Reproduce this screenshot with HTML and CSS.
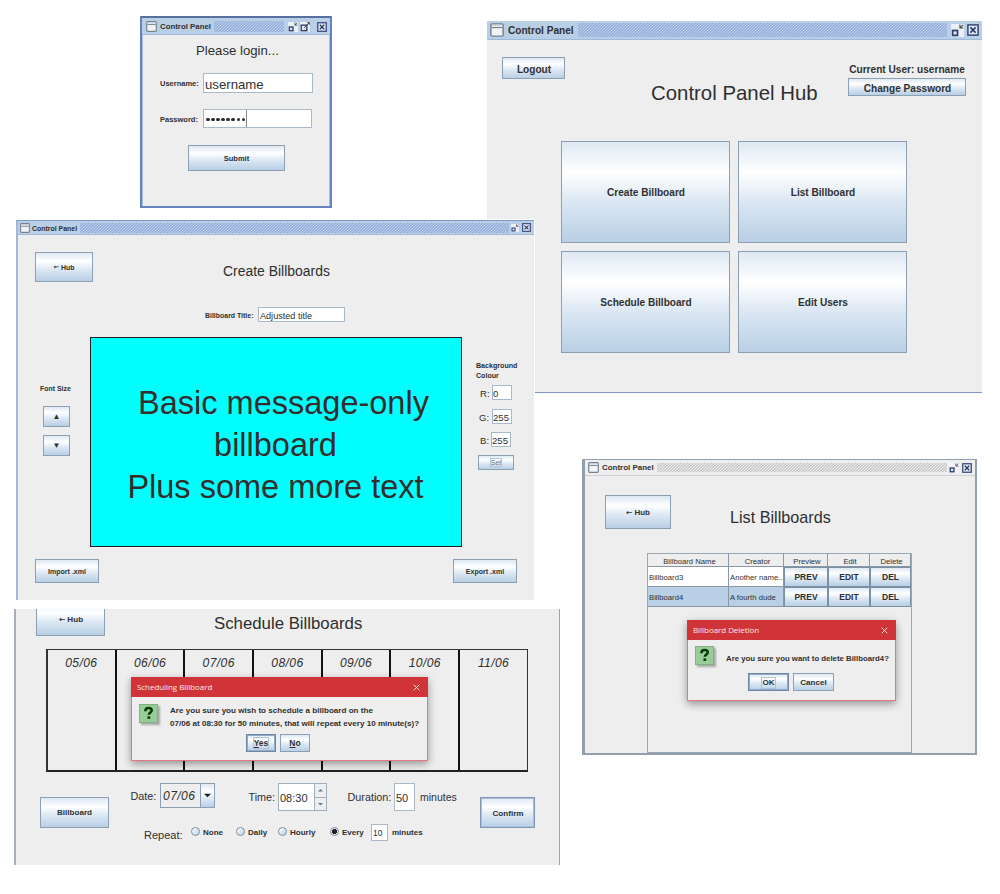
FILE: index.html
```html
<!DOCTYPE html>
<html lang="en">
<head>
<meta charset="utf-8">
<title>Billboard Control Panel</title>
<link rel="stylesheet" href="styles.css">
</head>
<body>
<svg class="defs" width="0" height="0" aria-hidden="true">
  <symbol id="i-window" viewBox="0 0 16 16">
    <rect x="1" y="1" width="14" height="14" rx="1.5" fill="#f1f3f6" stroke="#76828e" stroke-width="1.7"/>
    <path d="M2 5.2h12" stroke="#76828e" stroke-width="1.4"/>
    <path d="M3 3h10" stroke="#b3cae4" stroke-width="1.6" stroke-dasharray="1.5 1"/>
  </symbol>
  <symbol id="i-min" viewBox="0 0 16 16">
    <rect width="16" height="16" fill="#f2f5fa" opacity=".85"/>
    <rect x="2" y="8" width="6" height="6" fill="#dfe7f3" stroke="#32426e" stroke-width="2.2"/>
    <path d="M11 .5v4.500H15M11.500 4.500l3.500-3.500" fill="none" stroke="#444" stroke-width="1.300"/>
  </symbol>
  <symbol id="i-max" viewBox="0 0 16 16">
    <rect width="16" height="16" fill="#f2f5fa" opacity=".85"/>
    <rect x="2" y="5" width="9" height="9" fill="#dfe7f3" stroke="#32426e" stroke-width="2.200"/>
    <path d="M11.500 1H15v3.500M14.500 1.500L6.500 9.500" fill="none" stroke="#333" stroke-width="1.400"/>
  </symbol>
  <symbol id="i-close" viewBox="0 0 16 16">
    <rect x="1.200" y="1.200" width="13.600" height="13.600" fill="#e2e9f4" stroke="#35457a" stroke-width="2"/>
    <path d="M4.500 4.500l7 7M11.500 4.500l-7 7" stroke="#2b365c" stroke-width="2"/>
  </symbol>
  <symbol id="i-question" viewBox="0 0 20 20">
    <rect x=".5" y=".5" width="19" height="19" fill="#99cc99" stroke="#7fae7f"/>
    <path d="M6.700 7.600c0-2.200 1.400-3.300 3.400-3.300s3.300 1 3.300 2.600c0 2.200-3 2.100-3 4.500" fill="none" stroke="#063c06" stroke-width="2.700"/>
    <rect x="8.900" y="13" width="2.900" height="2.700" fill="#063c06"/>
  </symbol>
  <symbol id="i-x" viewBox="0 0 10 10"><path d="M1 1l8 8M9 1l-8 8" stroke="#fff" stroke-width="1.200"/></symbol>
</svg>

<main class="board">

  <section class="window hub">
    <header class="titlebar">
      <svg class="app-icon"><use href="#i-window"/></svg><span class="caption">Control Panel</span><i class="bumps"></i>
      <svg class="ctl"><use href="#i-min"/></svg><svg class="ctl"><use href="#i-close"/></svg>
    </header>
    <div class="hub-top">
      <button class="btn logout">Logout</button>
      <h1>Control Panel Hub</h1>
      <div class="user"><span>Current User: username</span><button class="btn">Change Password</button></div>
    </div>
    <div class="hub-grid">
      <button class="btn">Create Billboard</button><button class="btn">List Billboard</button>
      <button class="btn">Schedule Billboard</button><button class="btn">Edit Users</button>
    </div>
  </section>

  <section class="window login">
    <header class="titlebar">
      <svg class="app-icon"><use href="#i-window"/></svg><span class="caption">Control Panel</span><i class="bumps"></i>
      <svg class="ctl"><use href="#i-min"/></svg><svg class="ctl"><use href="#i-max"/></svg><svg class="ctl last"><use href="#i-close"/></svg>
    </header>
    <h1>Please login...</h1>
    <div class="field"><label>Username:</label><span class="input">username</span></div>
    <div class="field pass"><label>Password:</label><span class="input"><b></b><b></b><b></b><b></b><b></b><b></b><b></b><b></b><i class="caret"></i></span></div>
    <button class="btn submit">Submit</button>
  </section>

  <section class="window create">
    <header class="titlebar">
      <svg class="app-icon"><use href="#i-window"/></svg><span class="caption">Control Panel</span><i class="bumps"></i>
      <svg class="ctl"><use href="#i-min"/></svg><svg class="ctl"><use href="#i-close"/></svg>
    </header>
    <div class="create-top"><button class="btn"><span class="arrow">←</span>Hub</button><h1>Create Billboards</h1></div>
    <div class="title-row"><label>Billboard Title:</label><span class="input">Adjusted title</span></div>
    <div class="editor">
      <div class="font-size"><label>Font Size</label><button class="btn">▲</button><button class="btn">▼</button></div>
      <div class="canvas"><p class="first">Basic message-only</p><p>billboard</p><p>Plus some more text</p></div>
      <div class="colour">
        <label>Background<br>Colour</label>
        <div class="chan"><span>R:</span><span class="input">0</span></div>
        <div class="chan green"><span>G:</span><span class="input">255</span></div>
        <div class="chan blue"><span>B:</span><span class="input">255</span></div>
        <button class="btn set"><span>Set</span></button>
      </div>
    </div>
    <div class="xml"><button class="btn">Import .xml</button><button class="btn">Export .xml</button></div>
  </section>

  <section class="window schedule">
    <div class="sched-top"><button class="btn"><span class="arrow">←</span>Hub</button><h1>Schedule Billboards</h1></div>
    <div class="days"><span>05/06</span><span>06/06</span><span>07/06</span><span>08/06</span><span>09/06</span><span>10/06</span><span>11/06</span></div>
    <div class="sched-form">
      <button class="btn pick">Billboard</button>
      <div class="options">
        <div class="when">
          <span class="lbl date">Date:</span><span class="select">07/06<i><svg viewBox="0 0 8 5"><path d="M0 .5h8L4 4.500z" fill="#222"/></svg></i></span>
          <span class="lbl time">Time:</span><span class="spinner">08:30<i><svg viewBox="0 0 6 4"><path d="M0 3.500h6L3 .5z" fill="#667788"/></svg><svg viewBox="0 0 6 4"><path d="M0 .5h6L3 3.500z" fill="#667788"/></svg></i></span>
          <span class="lbl duration">Duration:</span><span class="input dur">50</span><span class="lbl mins">minutes</span>
        </div>
        <div class="repeat">
          <span class="lbl">Repeat:</span>
          <span class="radio none"><i></i>None</span><span class="radio daily"><i></i>Daily</span><span class="radio hourly"><i></i>Hourly</span><span class="radio every on"><i></i>Every</span>
          <span class="input ten">10</span><b class="unit">minutes</b>
        </div>
      </div>
      <button class="btn confirm">Confirm</button>
    </div>
    <div class="dialog sched-dialog">
      <header><span>Scheduling Billboard</span><svg><use href="#i-x"/></svg></header>
      <div class="message"><svg class="q"><use href="#i-question"/></svg><p>Are you sure you wish to schedule a billboard on the<br>07/06 at 08:30 for 50 minutes, that will repeat every 10 minute(s)?</p></div>
      <div class="actions"><button class="btn default"><span><u>Y</u>es</span></button><button class="btn"><u>N</u>o</button></div>
    </div>
  </section>

  <section class="window list">
    <header class="titlebar">
      <svg class="app-icon"><use href="#i-window"/></svg><span class="caption">Control Panel</span><i class="bumps"></i>
      <svg class="ctl"><use href="#i-min"/></svg><svg class="ctl"><use href="#i-close"/></svg>
    </header>
    <div class="list-top"><button class="btn"><span class="arrow">←</span>Hub</button><h1>List Billboards</h1></div>
    <div class="table">
      <div class="tr head"><span>Billboard Name</span><span>Creator</span><span>Preview</span><span>Edit</span><span>Delete</span></div>
      <div class="tr"><span>Billboard3</span><span>Another name...</span><button class="btn">PREV</button><button class="btn">EDIT</button><button class="btn">DEL</button></div>
      <div class="tr selected"><span>Billboard4</span><span>A fourth dude</span><button class="btn">PREV</button><button class="btn">EDIT</button><button class="btn">DEL</button></div>
    </div>
    <div class="dialog del-dialog">
      <header><span>Billboard Deletion</span><svg><use href="#i-x"/></svg></header>
      <div class="message"><svg class="q"><use href="#i-question"/></svg><p>Are you sure you want to delete Billboard4?</p></div>
      <div class="actions"><button class="btn default"><span>OK</span></button><button class="btn">Cancel</button></div>
    </div>
  </section>

</main>
</body>
</html>
```

FILE: styles.css
```css
* { box-sizing: border-box; margin: 0; padding: 0; }
body { background: #fff; font-family: "Liberation Sans", Arial, sans-serif; color: #303030; }
.defs { position: absolute; }
.board { position: relative; width: 1000px; height: 894px; overflow: hidden; }
h1 { font-weight: 400; white-space: nowrap; color: #2e2e2e; }
i { font-style: normal; }
label { font-weight: 700; white-space: nowrap; }

.window { position: absolute; background: #eee; display: flex; flex-direction: column; }
.titlebar { display: flex; align-items: center; background: #b8cfe6; border-bottom: 1px solid #9db9dc; flex: none; }
.caption { font-weight: 700; white-space: nowrap; }
.bumps {
  flex: 1; align-self: stretch;
  background: linear-gradient(135deg, #98b1da 25%, #bdd2ea 25% 50%, #98b1da 50% 75%, #bdd2ea 75%) 0 0 / 3px 3px;
}
.app-icon, .ctl { flex: none; }

.btn {
  display: flex; align-items: center; justify-content: center; flex: none;
  font: inherit; font-weight: 700; color: #303030; white-space: nowrap;
  border: 1px solid #8c9fb3;
  background: linear-gradient(#dde8f3 0%, #fff 30%, #dbe7f3 60%, #b8cfe5 100%);
}
.arrow { margin-right: 2px; font-family: "DejaVu Sans", sans-serif; font-size: .95em; }
.input {
  display: flex; align-items: center; flex: none; background: #fff;
  border: 1px solid #a9b9c9; color: #303030; white-space: nowrap;
}

/* Login */
.login { left: 140px; top: 16px; width: 192px; height: 192px; border: 2px solid #6482c0; border-top-color: #56719f; box-shadow: inset 1px 0 #a9c0e2, inset -1px 0 #a9c0e2; font-size: 7.5px; }
.login .titlebar { height: 17px; padding: 1px 3px 0 4px; }
.login .app-icon { width: 11px; height: 11px; }
.login .caption { font-size: 7.85px; margin: 0 3px 0 3px; }
.login .bumps { margin: 2px 4px 2px 0; }
.login .ctl { width: 10px; height: 10px; margin-right: 2px; }
.login .ctl.last { margin: 0 0 0 5px; }
.login h1 { font-size: 13.2px; line-height: 16px; margin: 8px 0 0 54px; }
.field { display: flex; align-items: center; margin: 14px 0 0 18px; height: 20px; }
.field label { width: 43px; font-size: 7.5px; padding-top: 1px; }
.field .input { width: 110px; height: 20px; font-size: 13.2px; padding: 2px 0 0 1px; }
.field.pass { margin-top: 16px; height: 19px; }
.pass .input { width: 109px; height: 19px; padding: 2px 0 0 2px; gap: 1.6px; }
.pass b { width: 3.500px; height: 3.500px; border-radius: 50%; background: #2d2d2d; }
.caret { width: 1px; height: 17px; background: #888; margin: -2px 0 0 -1px; }
.submit { width: 97px; height: 26px; margin: 17px 0 0 46px; }

/* Hub */
.hub { left: 487px; top: 21px; width: 495px; height: 372px; border-bottom: 1px solid #7f96bf; font-size: 10.1px; }
.hub .titlebar { height: 19px; padding: 0 3px 0 3px; }
.hub .app-icon { width: 14px; height: 14px; }
.hub .caption { margin: 0 4px; }
.hub .bumps { margin: 2px 4px 2px 0; }
.hub .ctl { width: 13px; height: 13px; }
.hub .ctl:last-child { margin-left: 3px; width: 12px; height: 12px; }
.hub-top { display: flex; height: 101px; padding-left: 15px; }
.logout { width: 63px; height: 22px; margin-top: 17px; padding: 2px 0 0 1px; }
.hub h1 { font-size: 20.4px; line-height: 24px; width: 196px; margin: 41px 0 0 86px; }
.user { display: flex; flex-direction: column; width: 120px; margin-top: 24px; align-items: center; }
.user span { font-weight: 700; line-height: 12px; margin-bottom: 2px; white-space: nowrap; }
.user .btn { width: 118px; height: 18px; padding: 2px 0 0 1px; }
.hub-grid { display: grid; grid-template: 102px 102px / 169px 169px; gap: 8px; padding-left: 74px; }
.hub-grid .btn { padding: 1px 0 0 1px; }

/* Create */
.create { left: 16px; top: 220px; width: 518px; height: 380px; border-left: 2px solid #a5b6d8; border-top: 1px solid #7c98c6; box-shadow: 1px -1px 0 #fff, 1px 0 0 #fff; font-size: 6.95px; }
.create .titlebar { height: 14px; padding: 0 3px 0 2px; }
.create .app-icon { width: 10px; height: 10px; }
.create .caption { margin: 1px 3px 0 2px; }
.create .bumps { margin: 2px 2px 1px 0; }
.create .ctl { width: 8px; height: 8px; }
.create .ctl:last-child { margin-left: 3px; width: 9px; height: 9px; }
.create-top { display: flex; height: 72px; padding: 17px 0 0 17px; }
.create-top .btn { width: 58px; height: 30px; }
.create h1 { font-size: 13.95px; line-height: 18px; margin: 10px 0 0 130px; }
.title-row { display: flex; align-items: center; height: 15px; margin-left: 187px; }
.title-row label { width: 53px; font-size: 6.95px; padding-top: 1px; }
.title-row .input { width: 87px; height: 15px; font-size: 9.1px; padding: 2px 0 0 1px; }
.editor { display: flex; margin-top: 15px; height: 210px; }
.font-size { width: 72px; padding: 47px 0 0 22px; }
.font-size label { display: block; line-height: 10px; }
.font-size .btn { width: 27px; height: 21px; margin: 12px 0 0 3px; font-size: 8px; }
.font-size .btn + .btn { margin-top: 8px; }
.canvas { width: 372px; height: 210px; background: #0ff; border: 1px solid #222; padding: 44px 1px 0 0; text-align: center; font-size: 32.5px; line-height: 42px; color: #352c2c; white-space: nowrap; }
.canvas .first { padding-left: 16px; }
.colour { padding: 25px 0 0 14px; }
.colour label { display: block; line-height: 9.500px; font-size: 7.1px; }
.chan { display: flex; align-items: center; margin: 4px 0 0 4px; height: 15px; font-size: 9.6px; }
.chan > :first-child { width: 12px; padding-top: 1px; }
.chan .input { width: 20px; height: 15px; padding: 2px 0 0 0; }
.chan.green { margin: 9px 0 0 3px; height: 15px; }
.chan.green > :first-child { width: 13px; }
.chan.blue { margin: 8px 0 0 4px; height: 15px; }
.chan.blue > :first-child { width: 11px; }
.colour .set { width: 36px; height: 15px; margin: 8px 0 0 2px; color: #777; font-weight: 400; }
.set span { border: 1px solid #b5c6da; line-height: 7px; }
.xml { display: flex; justify-content: space-between; padding: 12px 17px 0 17px; }
.xml .btn { width: 64px; height: 24px; font-size: 7.050px; }

/* Schedule */
.schedule { left: 14px; top: 609px; width: 546px; height: 256px; border-left: 2px solid #a5afba; border-right: 1px solid #9aa6b2; font-size: 8.1px; }
.sched-top { display: flex; height: 40px; padding-left: 20px; }
.sched-top .btn { width: 69px; height: 27px; border-top: 0; padding: 0 0 5px 1px; background: linear-gradient(#f4f8fb, #fff 15%, #dbe7f3 50%, #b8cfe5); }
.sched-top h1 { font-size: 16.8px; line-height: 20px; margin: 5px 0 0 109px; }
.days { display: grid; grid-template-columns: repeat(6, 68.700px) 1fr; margin-left: 30px; width: 482px; height: 123px; border: 1px solid #333; border-left-width: 2px; border-bottom: 2px solid #222; }
.days span { border-right: 2px solid #111; text-align: center; font-size: 12.1px; font-style: italic; line-height: 14px; padding-top: 6px; letter-spacing: .4px; }
.days span:last-child { border-right: 0; }
.sched-form { display: flex; }
.pick { width: 69px; height: 31px; margin: 25px 0 0 24px; }
.confirm { width: 55px; height: 31px; margin: 25px 0 0; padding: 1px 0 0 1px; border-color: #7f97b5; box-shadow: inset 0 0 0 1px #a9c0db; }
.options { width: 371px; padding: 11px 0 0 21px; }
.when { display: flex; height: 28px; font-size: 10.7px; }
.lbl { white-space: nowrap; font-size: 10.8px; line-height: 29px; flex: none; }
.when .date { width: 30px; line-height: 26px; padding-left: .5px; }
.select { display: flex; width: 55px; height: 25px; border: 1px solid #8c9fb3; font-size: 12.1px; font-style: italic; align-items: center; padding-left: 2px; letter-spacing: .4px; }
.select i { display: flex; align-items: center; justify-content: center; width: 14px; height: 23px; margin-left: auto; border-left: 1px solid #8c9fb3; background: linear-gradient(#dde8f3, #fff 30%, #b8cfe5); }
.select svg { width: 7px; height: 5px; }
.when .time { margin-left: 33px; width: 30px; padding-left: .5px; }
.spinner { display: flex; align-items: center; width: 49px; height: 28px; border: 1px solid #9fb0c0; background: #fff; padding: 1px 0 0 1px; font-size: 11px; }
.spinner i { display: flex; flex-direction: column; width: 12px; height: 26px; margin: -1px 0 0 auto; background: #eee; border-left: 1px solid #9fb0c0; }
.spinner svg { flex: 1; min-height: 0; padding: 4px 3px; width: 11px; }
.spinner svg + svg { border-top: 1px solid #9fb0c0; }
.when .duration { margin-left: 20px; width: 47px; padding-left: .5px; }
.dur { width: 21px; height: 28px; padding: 1px 0 0 1px; font-size: 11px; }
.when .mins { margin-left: 5px; font-size: 10.5px; }
.repeat { display: flex; align-items: center; height: 18px; margin: 12px 0 0 14px; font-weight: 700; font-size: 8px; }
.repeat .lbl { width: 47px; font-weight: 400; font-size: 11px; line-height: 18px; padding-top: 5px; }
.radio { display: flex; align-items: center; white-space: nowrap; gap: 3px; padding-top: 1px; }
.radio i { width: 9px; height: 9px; border: 1px solid #7d8fa3; border-radius: 50%; background: linear-gradient(135deg, #fff, #b8cfe5); margin-top: -2px; }
.radio.on i { background: radial-gradient(circle, #222 0 2.3px, #dde8f3 2.800px); }
.none { width: 45px; }
.daily { width: 42px; }
.hourly { width: 52px; }
.every { width: 41px; }
.ten { width: 17px; height: 17px; font-weight: 400; padding: 1px 0 0 1px; margin-left: 0; font-size: 8.5px; }
.unit { margin-left: 4px; padding-top: 1px; }

/* Dialogs */
.dialog { position: absolute; background: #eee; border: 1px solid #e07a80; box-shadow: 0 3px 8px rgba(0,0,0,.38); font-size: 7.9px; }
.dialog header { display: flex; justify-content: space-between; align-items: center; height: 20px; margin: -1px -1px 0; padding: 0 8px 0 6px; background: #d13438; color: #fbe9e9; font-family: "Open Sans", "Noto Sans", sans-serif; font-size: 7.9px; }
.dialog header svg { width: 7px; height: 7px; }
.message { display: flex; font-weight: 700; white-space: nowrap; line-height: 13px; }
.q { width: 19px; height: 19px; box-shadow: 2px 2px 2px rgba(0,0,0,.3); flex: none; }
.actions { display: flex; }
.actions .btn { height: 18px; }
.actions .default { border-color: #6e87a6; box-shadow: inset 0 0 0 1px #91aac8; }
.default span { border: 1px solid #b0c2dc; line-height: 10px; }
.sched-dialog { left: 115px; top: 68px; width: 297px; height: 84px; }
.sched-dialog .message { padding: 7px 0 0 7px; gap: 12px; height: 37px; font-size: 8.080px; }
.sched-dialog .actions { padding-left: 114px; gap: 4px; }
.sched-dialog .btn { width: 30px; font-size: 8.500px; }
.del-dialog { left: 102px; top: 160px; width: 209px; height: 81px; }
.del-dialog .message { padding: 6px 0 0 7px; gap: 12px; height: 33px; font-size: 7.800px; }
.del-dialog .message p { padding-top: 6px; }
.del-dialog .actions { padding-left: 60px; gap: 4px; }
.del-dialog .btn { width: 41px; font-size: 8.100px; padding-top: 1px; }

/* List */
.list { left: 582px; top: 459px; width: 395px; height: 296px; border: 2px solid #929fac; border-left-width: 3px; border-top-width: 1px; font-size: 7.95px; }
.list .titlebar { height: 16px; padding: 0 3px; background: #eee; border-bottom-color: #ccd2d8; }
.list .app-icon { width: 11px; height: 11px; }
.list .caption { margin: 0 3px; }
.list .bumps { margin: 3px 2px 3px 0; background-image: linear-gradient(135deg, #ccc 25%, #eee 25% 50%, #ccc 50% 75%, #eee 75%); }
.list .ctl { width: 10px; height: 10px; }
.list .ctl:last-child { margin-left: 3px; }
.list-top { display: flex; height: 77px; padding: 19px 0 0 20px; }
.list-top .btn { width: 66px; height: 34px; }
.list h1 { font-size: 16.2px; line-height: 20px; margin: 12px 0 0 59px; }
.table { margin-left: 62px; width: 265px; height: 200px; border: 1px solid #9aa9b8; }
.tr { display: grid; grid-template-columns: 81px 55px 44px 42px 41px; height: 20px; background: #fff; font-size: 7.700px; }
.tr > span { border-right: 1px solid #8797a8; border-bottom: 1px solid #8797a8; display: flex; align-items: center; white-space: nowrap; overflow: hidden; padding: 1px 0 0 1px; }
.tr.head { height: 13px; background: #eee; }
.tr.head > span { justify-content: center; padding: 2px 0 0 3px; }
.tr.selected { background: #b8cfe5; }
.tr .btn { font-size: 8.500px; border-color: #7b8fa5; }
```
